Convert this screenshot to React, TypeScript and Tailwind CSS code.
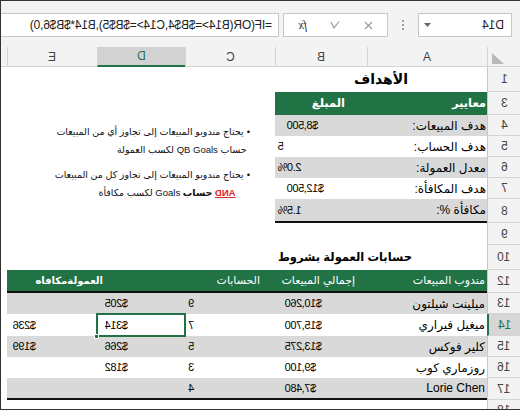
import React from "react";

type Rep = { name: string; sales: string; acc: string; com: string; bonus: string };

const goals: [string, string, boolean, boolean][] = [
  ["هدف المبيعات:", "$8,500", true, true],
  ["هدف الحساب:", "5", false, false],
  ["معدل العمولة:", "2.0%", true, false],
  ["هدف المكافأة:", "$12,500", false, true],
  ["مكافأة %:", "1.5%", true, false],
];

const reps: Rep[] = [
  { name: "ميلينت شيلتون", sales: "$10,260", acc: "9", com: "$205", bonus: "" },
  { name: "ميغيل فيراري", sales: "$15,700", acc: "7", com: "$314", bonus: "$236" },
  { name: "كلير فوكس", sales: "$13,275", acc: "5", com: "$266", bonus: "$199" },
  { name: "روزماري كوب", sales: "$9,100", acc: "3", com: "$182", bonus: "" },
  { name: "Lorie Chen", sales: "$7,480", acc: "4", com: "", bonus: "" },
];

// the sheet is shown mirrored, so digits and latin glyphs are flipped
function M({ children, className = "" }: { children: React.ReactNode; className?: string }) {
  return <span className={`inline-block -scale-x-100 whitespace-nowrap ${className}`}>{children}</span>;
}

function RowHead({ n, sel }: { n: string; sel?: boolean }) {
  return (
    <div
      className={`w-[33px] h-full flex items-center justify-center border-b border-[#d4d4d4] text-[12px] ${
        sel
          ? "bg-[#d6d6d6] text-[#217346] border-l-2 border-l-[#217346]"
          : "bg-[#f3f3f3] text-[#444] border-l border-l-[#c8c8c8]"
      }`}
    >
      <M>{n}</M>
    </div>
  );
}

const App: React.FC = () => {
  return (
    <div className="w-[520px] h-[410px] overflow-hidden bg-white border-l border-t border-b border-[#333] font-['Liberation_Sans','DejaVu_Sans',sans-serif] text-black">
      {/* formula bar */}
      <div className="h-[46px] bg-[#f3f3f3] flex pt-[12px]">
        <div className="w-[278px] h-[24px] bg-white border border-l-0 border-[#c6c6c6] overflow-hidden flex items-center justify-end pr-[6px]">
          <M className="text-[12px] text-[#222] tracking-[-0.2px]">{"=IF(OR(B14>=$B$4,C14>=$B$5),B14*$B$6,0)"}</M>
        </div>
        <div className="ml-[4px] w-[105px] h-[24px] bg-white border border-[#c6c6c6] flex items-center">
          <M className="ml-[13px] w-[10px] text-[12px] italic text-[#333] font-['Liberation_Serif',serif]">fx</M>
          <svg className="ml-[23px]" width="10" height="8" viewBox="0 0 10 8">
            <path d="M1 1 L4 7 L9 0.5" fill="none" stroke="#9a9a9a" strokeWidth="1.2" />
          </svg>
          <svg className="ml-[24px]" width="9" height="9" viewBox="0 0 9 9">
            <path d="M1 1 L8 8 M8 1 L1 8" stroke="#9a9a9a" strokeWidth="1.2" />
          </svg>
        </div>
        <div className="w-[30px] h-[24px] flex flex-col items-center justify-center gap-[2px]">
          <span className="w-[2px] h-[2px] bg-[#a0a0a0]" />
          <span className="w-[2px] h-[2px] bg-[#a0a0a0]" />
          <span className="w-[2px] h-[2px] bg-[#a0a0a0]" />
        </div>
        <div className="w-[94px] h-[24px] bg-white border border-[#c6c6c6] flex items-center justify-between pl-[5px] pr-[7px]">
          <svg width="7" height="4" viewBox="0 0 7 4">
            <path d="M0 0 L7 0 L3.5 4 Z" fill="#666" />
          </svg>
          <M className="text-[12px] text-[#222]">D14</M>
        </div>
      </div>

      {/* column headers */}
      <div className="h-[20px] flex bg-[#f3f3f3] text-[12px] text-[#444]">
        <div className="w-[6px] border-b border-[#d4d4d4]" />
        <div className="w-[90px] border-l border-b border-[#d4d4d4] flex items-center justify-center"><M>E</M></div>
        <div className="w-[88px] border-l border-[#d4d4d4] border-b-2 border-b-[#217346] bg-[#d2d2d2] text-[#217346] flex items-center justify-center"><M>D</M></div>
        <div className="w-[90px] border-l border-b border-[#d4d4d4] flex items-center justify-center"><M>C</M></div>
        <div className="w-[92px] border-l border-b border-[#d4d4d4] flex items-center justify-center"><M>B</M></div>
        <div className="w-[120px] border-l border-b border-[#d4d4d4] flex items-center justify-center"><M>A</M></div>
        <div className="w-[33px] border-l border-b border-[#d4d4d4] flex items-end pl-[4px] pb-[2px]">
          <svg width="12" height="11" viewBox="0 0 12 11">
            <path d="M0 0 L0 11 L12 11 Z" fill="#b8b8b8" />
          </svg>
        </div>
      </div>

      {/* rows 1-8 */}
      <div className="flex">
        <div className="w-[274px] pt-[56px] pr-[25px] text-[9.5px] leading-[18px] text-[#111]" dir="rtl">
          <div className="flex gap-[3px]">
            <span>•</span>
            <div>
              <div>يحتاج مندوبو المبيعات إلى تجاوز أي من المبيعات</div>
              <div className="mr-[-3px]">حساب QB Goals لكسب العمولة</div>
            </div>
          </div>
          <div className="flex gap-[3px] mt-[7px]">
            <span>•</span>
            <div>
              <div>يحتاج مندوبو المبيعات إلى تجاوز كل من المبيعات</div>
              <div className="mr-[8px]">
                <M className="font-bold text-[#e0242b] underline">AND</M> <span className="font-bold">حساب</span> Goals لكسب مكافأة
              </div>
            </div>
          </div>
        </div>

        <div className="w-[212px] flex flex-col">
          <div className="h-[25px] flex items-center justify-center text-[14px] font-bold">الأهداف</div>
          <div className="h-[23px] flex bg-[#217346] text-white font-bold text-[11.5px] whitespace-nowrap">
            <div className="w-[92px] flex items-center justify-end pr-[22px]">المبلغ</div>
            <div className="w-[120px] flex items-center justify-end pr-[1px]">معايير</div>
          </div>
          {goals.map(([label, value, shaded, money], i) => (
            <div
              key={label}
              className={`flex text-[12px] ${shaded ? "bg-[#d9d9d9]" : "bg-white"} ${
                i === goals.length - 1 ? "h-[24px] border-b-2 border-[#111]" : "h-[21px]"
              }`}
            >
              <div className={`w-[92px] flex items-center ${money ? "pl-[12px]" : "pl-[3px]"}`}>
                <M className="text-[11px] tracking-[-0.4px]">{value}</M>
              </div>
              <div className="w-[120px] flex items-center justify-start pr-[1px] whitespace-nowrap" dir="rtl">
                {label}
              </div>
            </div>
          ))}
        </div>

        <div className="flex flex-col">
          <div className="h-[25px]"><RowHead n="1" /></div>
          <div className="h-[23px]"><RowHead n="3" /></div>
          <div className="h-[21px]"><RowHead n="4" /></div>
          <div className="h-[21px]"><RowHead n="5" /></div>
          <div className="h-[21px]"><RowHead n="6" /></div>
          <div className="h-[21px]"><RowHead n="7" /></div>
          <div className="h-[24px]"><RowHead n="8" /></div>
        </div>
      </div>

      {/* rows 9-18 */}
      <div className="flex h-[22px]">
        <div className="w-[486px]" />
        <RowHead n="9" />
      </div>
      <div className="flex h-[25px]">
        <div className="w-[486px] flex items-center justify-start pr-[75px] text-[11.5px] font-bold whitespace-nowrap" dir="rtl">
          حسابات العمولة بشروط
        </div>
        <RowHead n="10" />
      </div>
      <div className="flex h-[23px]">
        <div className="w-[6px]" />
        <div className="w-[480px] flex bg-[#217346] border-b-2 border-[#111] text-white text-[11px] whitespace-nowrap">
          <div className="w-[178px] flex items-center justify-start pr-[82px] text-[10px] font-bold" dir="rtl">العمولةمكافاه</div>
          <div className="w-[90px] flex items-center justify-start pr-[15px]" dir="rtl">الحسابات</div>
          <div className="w-[92px] flex items-center justify-start pr-[12px]" dir="rtl">إجمالي المبيعات</div>
          <div className="w-[120px] flex items-center justify-start pr-[2px]" dir="rtl">مندوب المبيعات</div>
        </div>
        <RowHead n="12" />
      </div>
      {reps.map((r, i) => {
        const last = i === reps.length - 1;
        const sel = i === 1;
        return (
          <div key={r.name} className={`flex ${last || sel ? "h-[22px]" : "h-[21px]"}`}>
            <div className="w-[6px]" />
            <div
              className={`w-[480px] flex text-[12px] ${i % 2 === 0 ? "bg-[#d9d9d9]" : "bg-white"} ${
                last ? "border-b-2 border-[#111]" : ""
              }`}
            >
              <div className="w-[90px] flex items-center pl-[6px]">
                <M className="text-[11px] tracking-[-0.4px]">{r.bonus}</M>
              </div>
              <div
                className={`relative w-[88px] flex items-center pl-[8px] ${
                  sel ? "outline-2 -outline-offset-1 outline-[#217346]" : ""
                }`}
              >
                <M className="text-[11px] tracking-[-0.4px]">{r.com}</M>
                {sel && <span className="absolute left-[-3px] bottom-[-3px] w-[5px] h-[5px] bg-[#217346] border border-white" />}
              </div>
              <div className="w-[90px] flex items-center pl-[3px]">
                <M className="text-[11px]">{r.acc}</M>
              </div>
              <div className="w-[92px] flex items-center pl-[10px]">
                <M className="text-[11px] tracking-[-0.4px]">{r.sales}</M>
              </div>
              <div className="w-[120px] flex items-center justify-start pr-[2px] whitespace-nowrap" dir="rtl">
                {r.name}
              </div>
            </div>
            <RowHead n={String(13 + i)} sel={sel} />
          </div>
        );
      })}
      <div className="flex h-[21px]">
        <div className="w-[486px]" />
        <RowHead n="18" />
      </div>
    </div>
  );
};

export default App;
